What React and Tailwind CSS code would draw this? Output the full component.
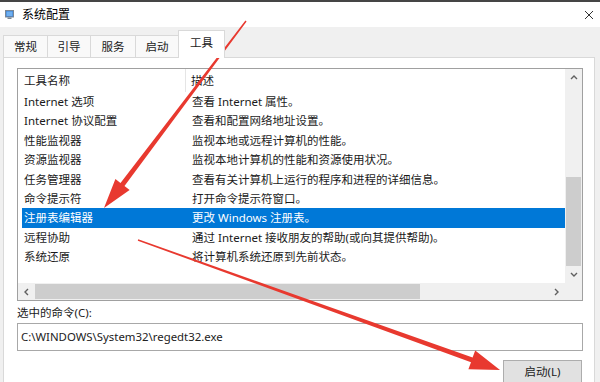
import React from "react";

const tools = [
  ["Internet 选项", "查看 Internet 属性。"],
  ["Internet 协议配置", "查看和配置网络地址设置。"],
  ["性能监视器", "监视本地或远程计算机的性能。"],
  ["资源监视器", "监视本地计算机的性能和资源使用状况。"],
  ["任务管理器", "查看有关计算机上运行的程序和进程的详细信息。"],
  ["命令提示符", "打开命令提示符窗口。"],
  ["注册表编辑器", "更改 Windows 注册表。"],
  ["远程协助", "通过 Internet 接收朋友的帮助(或向其提供帮助)。"],
  ["系统还原", "将计算机系统还原到先前状态。"],
];

const tabs = ["常规", "引导", "服务", "启动"];
const tabWidths = ["w-[44px]", "w-[43px]", "w-[45px]", "w-[43px]"];

function Chevron({ dir }) {
  const pts = {
    up: "2,6 5,3 8,6",
    down: "2,3 5,6 8,3",
    left: "6,2 3,5 6,8",
    right: "3,2 6,5 3,8",
  }[dir];
  return (
    <svg width="10" height="10" viewBox="0 0 10 10">
      <polyline points={pts} fill="none" stroke="#606060" strokeWidth="1.4" />
    </svg>
  );
}

function App() {
  return (
    <div
      className="w-[600px] h-[382px] relative overflow-hidden bg-[#f0f0f0] flex flex-col text-[#1a1a1a]"
      style={{ fontFamily: '"Noto Sans", "Noto Sans CJK SC", sans-serif' }}
    >
      {/* title bar */}
      <div className="h-[27px] bg-white border-t-2 border-[#454545] flex items-center pl-[5px] pr-[6px] shrink-0">
        <svg width="9" height="9" viewBox="0 0 9 9">
          <rect x="0.5" y="0.5" width="8" height="6.5" fill="#3b7fd4" stroke="#7a8794" />
          <rect x="1.5" y="1.5" width="6" height="4.5" fill="#6fb0f0" />
          <rect x="2.5" y="7.5" width="4" height="1.5" fill="#7a8794" />
        </svg>
        <span className="ml-[8px] text-[12px] leading-[16px] text-black">系统配置</span>
        <svg className="ml-auto" width="10" height="10" viewBox="0 0 10 10">
          <path d="M1 1 L9 9 M9 1 L1 9" stroke="#333" strokeWidth="1" />
        </svg>
      </div>

      {/* tabs */}
      <div className="h-[30px] flex items-end pl-[3px] shrink-0">
        {tabs.map((t, i) => (
          <div
            key={t}
            className={`${tabWidths[i]} h-[22px] bg-[#f9f9f9] border border-b-0 border-r-0 border-[#d9d9d9] flex items-center justify-center text-[11.5px] leading-[14px]`}
          >
            {t}
          </div>
        ))}
        <div className="w-[47px] h-[28px] -mb-px relative z-10 bg-white border border-b-0 border-[#d9d9d9] flex items-center justify-center text-[11.5px] leading-[14px] pb-[3px]">
          工具
        </div>
      </div>

      {/* tab pane */}
      <div className="flex-1 ml-[3px] w-[592px] bg-white border border-[#d9d9d9] pl-[13px] pt-[10px]">
        <div className="w-[566px] h-[233px] border border-[#a0a0a0] flex flex-col">
          <div className="flex flex-1 min-h-0">
            {/* list */}
            <div className="flex-1 pl-[4px] flex flex-col text-[11.5px]">
              <div className="h-[23px] flex items-center shrink-0">
                <div className="w-[164px] h-full pl-[2px] flex items-center border-r border-[#e5e5e5]">工具名称</div>
                <div className="pl-[5px]">描述</div>
              </div>
              {tools.map(([name, desc], i) => (
                <div
                  key={name}
                  className={`h-[19.4px] flex items-center shrink-0 ${
                    i === 6 ? "bg-[#0078d7] text-white" : ""
                  }`}
                >
                  <div className="w-[168px] pl-[2px] whitespace-nowrap">{name}</div>
                  <div className="pl-[2px] whitespace-nowrap">{desc}</div>
                </div>
              ))}
            </div>
            {/* vertical scrollbar */}
            <div className="w-[17px] bg-[#f0f0f0] flex flex-col">
              <div className="h-[17px] flex items-center justify-center">
                <Chevron dir="up" />
              </div>
              <div className="flex-1" />
              <div className="h-[89px] mx-[1px] bg-[#cdcdcd]" />
              <div className="h-[17px] flex items-center justify-center">
                <Chevron dir="down" />
              </div>
            </div>
          </div>
          {/* horizontal scrollbar */}
          <div className="h-[17px] flex shrink-0">
            <div className="flex-1 bg-[#f0f0f0] flex items-center">
              <div className="w-[17px] h-full flex items-center justify-center">
                <Chevron dir="left" />
              </div>
              <div className="w-[385px] h-[15px] bg-[#cdcdcd]" />
              <div className="ml-auto w-[17px] h-full flex items-center justify-center">
                <Chevron dir="right" />
              </div>
            </div>
            <div className="w-[17px] bg-[#f0f0f0]" />
          </div>
        </div>

        <div className="mt-[4px] h-[16px] flex items-center text-[11.5px]">选中的命令(C):</div>
        <div className="mt-[2px] w-[566px] h-[28px] border border-[#a8a8a8] flex items-center pl-[3px] text-[11.4px] text-[#222]">
          C:\WINDOWS\System32\regedt32.exe
        </div>
        <div className="w-[566px] flex justify-end mt-[9px]">
          <div className="mr-[1px] w-[79px] h-[26px] bg-[#e1e1e1] border border-[#adadad] flex items-center justify-center text-[11.5px] pb-[3px]">
            启动(L)
          </div>
        </div>
      </div>

      {/* red annotation arrows */}
      <svg className="absolute inset-0 pointer-events-none" width="600" height="382" viewBox="0 0 600 382">
        <polygon
          fill="#e8392f"
          points="245.4,20.6 120.5,182.9 115.4,178.9 104,208 129.6,189.9 124.5,185.9 246.6,21.4"
        />
        <polygon
          fill="#e8392f"
          points="137.8,240.7 471.0,362.3 468.4,369.3 500,370 475.2,350.5 472.6,357.5 138.2,239.3"
        />
      </svg>
    </div>
  );
}

export default App;
